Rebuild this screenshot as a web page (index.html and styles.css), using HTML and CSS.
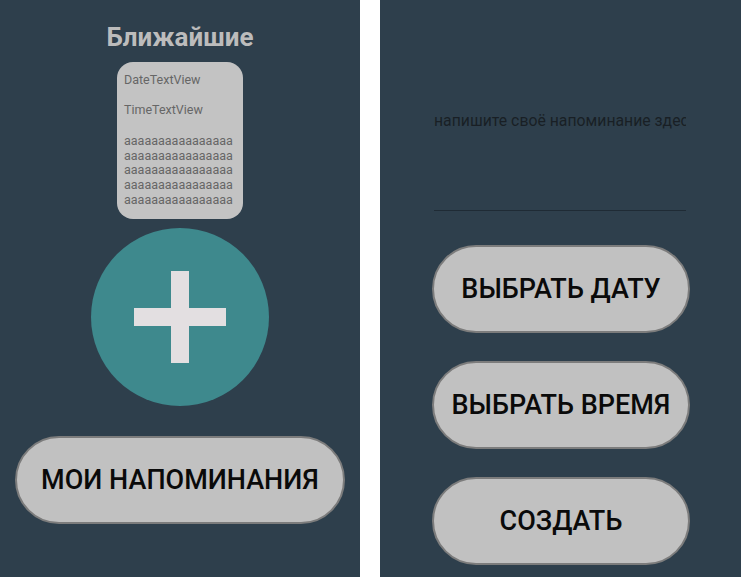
FILE: index.html
```html
<!DOCTYPE html>
<html lang="ru">
<head>
<meta charset="utf-8">
<title>Напоминания</title>
<link rel="stylesheet" href="styles.css">
</head>
<body>
<div class="screens">
  <section class="screen screen-main">
    <h1 class="title">Ближайшие</h1>
    <div class="card">
      <div class="card-date">DateTextView</div>
      <div class="card-time">TimeTextView</div>
      <div class="card-body">aaaaaaaaaaaaaaaaaaaaaaaaaaaaaaaaaaaaaaaaaaaaaaaaaaaaaaaaaaaaaaaaaaaaaaaaaaaaaaaa</div>
    </div>
    <button class="fab" type="button" aria-label="Добавить">
      <span class="fab-v"></span>
      <span class="fab-h"></span>
    </button>
    <button class="pill pill-wide" type="button">МОИ НАПОМИНАНИЯ</button>
  </section>
  <div class="divider"></div>
  <section class="screen screen-create">
    <div class="field">
      <span class="field-hint">напишите своё напоминание здесь</span>
    </div>
    <div class="actions">
      <button class="pill" type="button">ВЫБРАТЬ ДАТУ</button>
      <button class="pill" type="button">ВЫБРАТЬ ВРЕМЯ</button>
      <button class="pill" type="button">СОЗДАТЬ</button>
    </div>
  </section>
</div>
</body>
</html>
```
FILE: styles.css
```css
* { box-sizing: border-box; }
html, body {
  margin: 0;
  padding: 0;
  background: #ffffff;
  font-family: Roboto, "Liberation Sans", sans-serif;
}
.screens {
  display: flex;
  height: 577px;
  width: 741px;
}
.screen {
  background: #2e3f4c;
  height: 100%;
}
.divider {
  width: 20px;
  background: #ffffff;
}
.screen-main {
  width: 360px;
  display: flex;
  flex-direction: column;
  align-items: center;
  padding-top: 22px;
}
.title {
  margin: 0;
  font-size: 26px;
  line-height: 30px;
  font-weight: 700;
  color: #bcbcbc;
}
.card {
  margin-top: 10px;
  width: 126px;
  height: 157px;
  background: #c3c3c3;
  border-radius: 16px;
  padding: 10px 0 0 7px;
  color: #666666;
  font-size: 12.5px;
}
.card-date, .card-time {
  line-height: 15px;
}
.card-time {
  margin-top: 15px;
}
.card-body {
  margin-top: 17px;
  width: 110px;
  line-height: 14.7px;
  word-break: break-all;
}
.fab {
  margin-top: 9px;
  width: 178px;
  height: 178px;
  border-radius: 50%;
  border: none;
  background: #3e898d;
  position: relative;
  padding: 0;
}
.fab-v, .fab-h {
  position: absolute;
  background: #e3dfe1;
}
.fab-v {
  left: 80px;
  top: 43px;
  width: 18px;
  height: 92px;
}
.fab-h {
  left: 43px;
  top: 80px;
  width: 92px;
  height: 18px;
}
.pill {
  height: 88px;
  width: 258px;
  border-radius: 44px;
  border: 2px solid #7c7c7c;
  background: #c1c1c1;
  color: #0a0a0a;
  font-family: Roboto, "Liberation Sans", sans-serif;
  font-size: 27px;
  font-weight: 500;
  padding: 0;
  white-space: nowrap;
}
.pill-wide {
  width: 330px;
  margin-top: 30px;
}
.screen-create {
  flex: 1;
  padding-left: 52px;
  display: flex;
  flex-direction: column;
}
.field {
  margin-top: 103px;
  margin-left: 2px;
  width: 252px;
  height: 108px;
  border-bottom: 1.5px solid #1f2b35;
  overflow: hidden;
  white-space: nowrap;
  padding-top: 8px;
}
.field-hint {
  font-size: 15.8px;
  line-height: 20px;
  color: #191f25;
}
.actions {
  margin-top: 34px;
  display: flex;
  flex-direction: column;
  gap: 28px;
}
```
